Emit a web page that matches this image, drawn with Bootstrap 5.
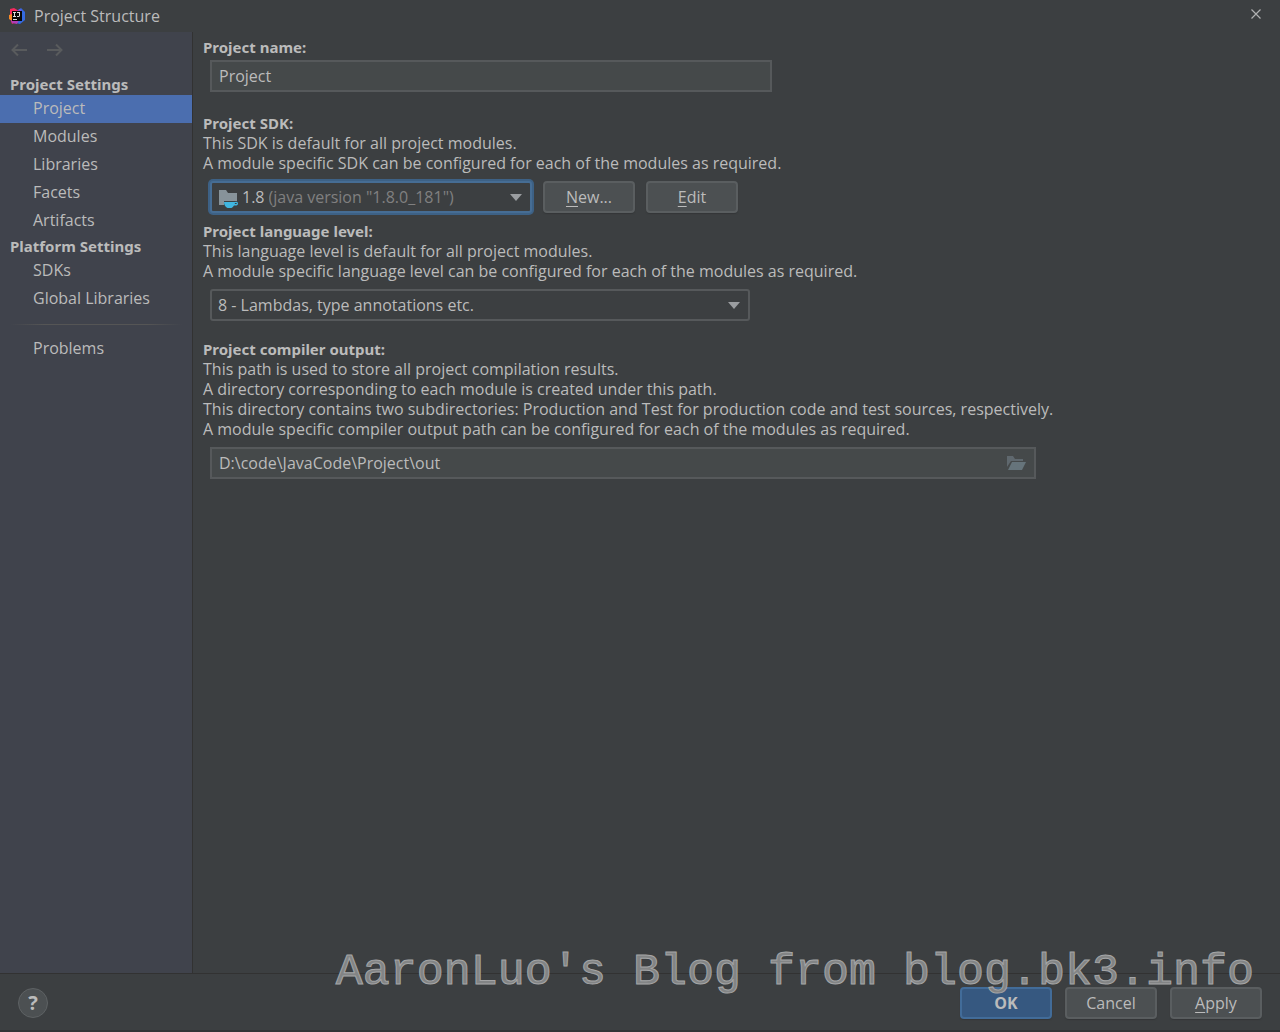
<!DOCTYPE html>
<html lang="en">
<head>
<meta charset="utf-8">
<meta name="viewport" content="width=device-width, initial-scale=1">
<title>Project Structure</title>
<link href="https://cdn.jsdelivr.net/npm/bootstrap@5.3.0/dist/css/bootstrap.min.css" rel="stylesheet">
<style>
  body { background: #3c3f41; color: #bbbbbb; font: 16px/20px "Open Sans", "Noto Sans", sans-serif; }
  h1, .main-pane label, .main-pane p { font-size: 16px; line-height: 20px; margin: 0; }
  h2, .main-pane .field-title { font: 700 15px/20px "Noto Sans", sans-serif; display: block; margin: 0; }
  .title-strip { height: 32px; padding: 0 18px 0 9px; gap: 9px; }
  .title-strip h1 { font-weight: 400; }
  .plain-btn { background: none; border: 0; padding: 0; color: inherit; display: flex; }
  .side-pane { width: 193px; background: #40434c; border-right: 1px solid #323232; }
  .history { height: 41px; padding: 10px 11px; gap: 18px; color: #595b5d; }
  .side-pane h2 { padding: 1px 10px; }
  .side-pane .nav-link { padding: 3px 33px 5px; color: #bbbbbb; line-height: 20px; white-space: nowrap; }
  .side-pane .nav-link.active { background: #4b6eaf; }
  .side-rule { height: 1px; margin: 11px 10px 10px; background: linear-gradient(90deg, transparent, #555555 20%, #555555 80%, transparent); }
  .main-pane { padding: 5px 10px; min-width: 0; }
  .field-row { padding: 8px 7px 0; gap: 11px; }
  .name-row { padding-top: 3px; }
  .group { margin-bottom: 18px; }
  .group-name { margin-bottom: 21px; }
  .group-sdk { margin-bottom: 8px; }
  .box { width: 100%; height: 32px; border: 2px solid #56595b; background: #45494a; }
  .box input, .combo select { background: transparent; border: 0; outline: 0; color: #bbbbbb; padding: 0; min-width: 0; height: 28px; }
  .box input { padding-left: 7px; }
  .combo { background: #3c3f41; border-radius: 3px; }
  .combo select { appearance: none; -webkit-appearance: none; }
  .w-level select { padding-left: 6px; }
  .combo option { background: #3c3f41; }
  .combo .arrow { pointer-events: none; margin: 0 8px 0 -20px; }
  .combo.on { border-color: #466d94; box-shadow: 0 0 0 2px #3d6185; }
  .combo.on select { color: #808080; }
  .sdk-icon { margin: 3px 3px 0 7px; }
  .w-name { max-width: 562px; }
  .w-sdk { max-width: 322px; }
  .w-level { max-width: 540px; }
  .w-path { max-width: 826px; }
  .dlg-btn { width: 92px; height: 32px; padding: 0; font-size: 16px; line-height: 20px; color: #bbbbbb; background: #4c5052; border: 2px solid #5a5e60; border-radius: 4px; box-shadow: 0 1px 1px #343638; }
  .dlg-btn:hover { color: #bbbbbb; background: #55595b; border-color: #5e6264; }
  .dlg-btn.main { background: #365880; border-color: #426c99; font-weight: 700; }
  u { text-underline-offset: 3px; }
  .foot { height: 59px; border-top: 1px solid #323232; border-bottom: 2px solid #323436; padding: 2px 18px 0; gap: 13px; position: relative; }
  .help { width: 30px; height: 30px; border-radius: 50%; background: #4c5052; border: 1px solid #5e6264; align-items: center; justify-content: center; font: 700 20px/28px "Noto Sans", sans-serif; }
  .watermark { position: absolute; right: 26px; bottom: 29px; font: 45px/56px "Liberation Mono", monospace; white-space: nowrap; color: #828485; -webkit-text-stroke: 1px #a4a5a6; pointer-events: none; }
</style>
</head>
<body>
<div class="d-flex flex-column min-vh-100">
  <header class="title-strip d-flex align-items-center">
    <svg width="16" height="16" viewBox="0 0 16 16" aria-hidden="true">
      <path fill="#f7295e" d="M1 1 5 0l5 3-1 10-6 3-1-3-1-6z"/><path fill="#f98a28" d="M0 7l3-1v7l-3-2z"/>
      <path fill="#3469e0" d="M9 2l3-2 4 4v8l-5 4-4-1z"/><path fill="#8a4be0" d="M8 3l3-2 2 3v3H9z"/><path fill="#b13bb5" d="M2 12h8l-2 4-5-1z"/>
      <path fill="#080808" d="M3 3h10v10H3z"/><path fill="#dddddd" d="M4 4h3v1H6v3h1v1H4V8h1V5H4zM8 4h3v4l-1 1H8V8h2V5H8zM4 11h4v1H4z"/>
    </svg>
    <h1 class="flex-grow-1">Project Structure</h1>
    <button class="plain-btn mb-1" type="button" aria-label="Close"><svg width="12" height="12" viewBox="0 0 12 12"><path d="M1.500 1.500l9 9m0-9l-9 9" stroke="#b0b1b2" stroke-width="1.200"/></svg></button>
  </header>
  <div class="d-flex flex-grow-1">
    <nav class="side-pane flex-shrink-0" aria-label="Settings sections">
      <div class="history d-flex">
        <button class="plain-btn" type="button" aria-label="Back"><svg width="17" height="16" viewBox="0 0 17 16" fill="none" stroke="currentColor" stroke-width="2"><path d="M16 8H2M7 2.500L1.500 8 7 13.500"/></svg></button>
        <button class="plain-btn" type="button" aria-label="Forward"><svg width="17" height="16" viewBox="0 0 17 16" fill="none" stroke="currentColor" stroke-width="2"><path d="M1 8h14M10 2.500L15.500 8 10 13.500"/></svg></button>
      </div>
      <h2>Project Settings</h2>
      <div class="nav flex-column">
        <a class="nav-link active" aria-current="page" href="#">Project</a>
        <a class="nav-link" href="#">Modules</a>
        <a class="nav-link" href="#">Libraries</a>
        <a class="nav-link" href="#">Facets</a>
        <a class="nav-link" href="#">Artifacts</a>
      </div>
      <h2>Platform Settings</h2>
      <div class="nav flex-column">
        <a class="nav-link" href="#">SDKs</a>
        <a class="nav-link" href="#">Global Libraries</a>
        <div class="side-rule"></div>
        <a class="nav-link" href="#">Problems</a>
      </div>
    </nav>
    <main class="main-pane flex-grow-1">
      <section class="group-name">
        <label class="field-title" for="pname">Project name:</label>
        <div class="field-row name-row"><div class="box w-name d-flex"><input class="flex-grow-1" id="pname" type="text" value="Project"></div></div>
      </section>
      <section class="group-sdk">
        <label class="field-title" for="sdk">Project SDK:</label>
        <p>This SDK is default for all project modules.</p>
        <p>A module specific SDK can be configured for each of the modules as required.</p>
        <div class="field-row d-flex">
          <div class="box combo on w-sdk d-flex align-items-center">
            <svg class="sdk-icon flex-shrink-0" width="20" height="18" viewBox="0 0 20 18" aria-hidden="true"><path fill="#87939a" d="M0 0h7l2 3h9v8H5v4H0z"/><path fill="#40b6e0" d="M5 12h11q3-1 3 1.500T15 15.500Q14 17 12.500 18h-4Q5 16 5 12z"/><path fill="#3c3f41" d="M16 13h1.700v1H15.700z"/></svg>
            <label class="me-1" for="sdk">1.8</label>
            <select class="flex-grow-1" id="sdk"><option>(java version "1.8.0_181")</option></select>
            <svg class="arrow flex-shrink-0" width="12" height="7" viewBox="0 0 12 7" aria-hidden="true"><path fill="#9a9da0" d="M0 0h12L6 7z"/></svg>
          </div>
          <button class="btn dlg-btn" type="button"><u>N</u>ew...</button>
          <button class="btn dlg-btn" type="button"><u>E</u>dit</button>
        </div>
      </section>
      <section class="group">
        <label class="field-title" for="level">Project language level:</label>
        <p>This language level is default for all project modules.</p>
        <p>A module specific language level can be configured for each of the modules as required.</p>
        <div class="field-row"><div class="box combo w-level d-flex align-items-center">
          <select class="flex-grow-1" id="level"><option>8 - Lambdas, type annotations etc.</option></select>
          <svg class="arrow flex-shrink-0" width="12" height="7" viewBox="0 0 12 7" aria-hidden="true"><path fill="#9a9da0" d="M0 0h12L6 7z"/></svg>
        </div></div>
      </section>
      <section>
        <label class="field-title" for="out">Project compiler output:</label>
        <p>This path is used to store all project compilation results.</p>
        <p>A directory corresponding to each module is created under this path.</p>
        <p>This directory contains two subdirectories: Production and Test for production code and test sources, respectively.</p>
        <p>A module specific compiler output path can be configured for each of the modules as required.</p>
        <div class="field-row"><div class="box w-path d-flex align-items-center">
          <input class="flex-grow-1" id="out" type="text" value="D:\code\JavaCode\Project\out">
          <button class="plain-btn me-2" type="button" aria-label="Browse"><svg width="19" height="14" viewBox="0 0 19 14"><path fill="#5f686e" d="M0 0h6l2 3h8v2H4L0 11z"/><path fill="#66747b" d="M5 6h14l-4 8H1z"/></svg></button>
        </div></div>
      </section>
    </main>
  </div>
  <footer class="foot d-flex align-items-center">
    <button class="plain-btn help me-auto" type="button" aria-label="Help">?</button>
    <button class="btn dlg-btn main" type="button">OK</button>
    <button class="btn dlg-btn" type="button">Cancel</button>
    <button class="btn dlg-btn" type="button"><u>A</u>pply</button>
    <div class="watermark">AaronLuo's Blog from blog.bk3.info</div>
  </footer>
</div>
<script src="https://cdn.jsdelivr.net/npm/bootstrap@5.3.0/dist/js/bootstrap.bundle.min.js"></script>
</body>
</html>
